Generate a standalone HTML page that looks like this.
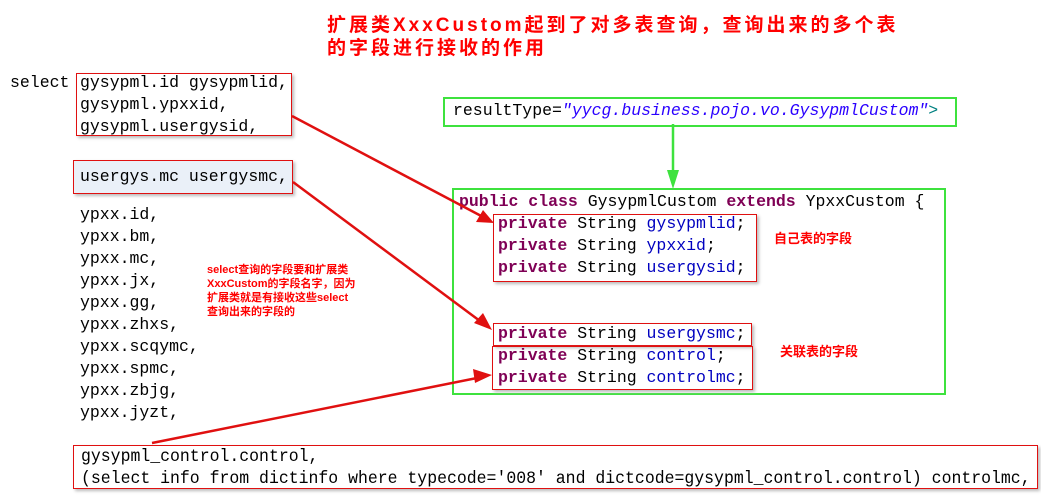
<!DOCTYPE html>
<html><head><meta charset="utf-8"><style>
body{margin:0;width:1041px;height:495px;background:#fff;position:relative;overflow:hidden;font-family:"Liberation Mono",monospace}
.t{position:absolute;white-space:pre;font-size:16.5px;line-height:22px;color:#000}
.b{position:absolute;border:1px solid #e01010;box-shadow:2px 2px 3px #bbb}
.g{position:absolute;border:2px solid #3ee23e}
.kw{color:#7f0055;font-weight:bold}
.f{color:#0000c0}
.red{position:absolute;color:#f00;font-weight:bold;font-family:"Liberation Sans","Noto Sans CJK SC",sans-serif;white-space:pre}
</style></head><body>
<div class="red" style="left:327px;top:14px;font-size:19px;line-height:23px;letter-spacing:3px">扩展类XxxCustom起到了对多表查询，查询出来的多个表
的字段进行接收的作用</div>

<div class="t" style="left:10px;top:72px">select</div>
<div class="b" style="left:76px;top:73px;width:214px;height:61px"></div>
<div class="t" style="left:80px;top:72px">gysypml.id gysypmlid,
gysypml.ypxxid,
gysypml.usergysid,</div>
<div class="b" style="left:73px;top:160px;width:218px;height:32px;background:#eaf0f8"></div>
<div class="t" style="left:80px;top:166px">usergys.mc usergysmc,</div>
<div class="t" style="left:80px;top:204px">ypxx.id,
ypxx.bm,
ypxx.mc,
ypxx.jx,
ypxx.gg,
ypxx.zhxs,
ypxx.scqymc,
ypxx.spmc,
ypxx.zbjg,
ypxx.jyzt,</div>

<div class="red" style="left:207px;top:263px;font-size:11px;line-height:14px">select查询的字段要和扩展类
XxxCustom的字段名字，因为
扩展类就是有接收这些select
查询出来的字段的</div>

<div class="g" style="left:443px;top:97px;width:510px;height:26px"></div>
<div class="t" style="left:453px;top:100px">resultType=<i class="f" style="color:#2a00ff">"yycg.business.pojo.vo.GysypmlCustom"</i><span style="color:#008080">&gt;</span></div>

<div class="g" style="left:452px;top:188px;width:490px;height:203px"></div>
<div class="t" style="left:459px;top:191px"><span class="kw">public class</span> GysypmlCustom <span class="kw">extends</span> YpxxCustom {</div>
<div class="b" style="left:493px;top:214px;width:262px;height:66px"></div>
<div class="t" style="left:498px;top:213px"><span class="kw">private</span> String <span class="f">gysypmlid</span>;
<span class="kw">private</span> String <span class="f">ypxxid</span>;
<span class="kw">private</span> String <span class="f">usergysid</span>;</div>
<div class="b" style="left:493px;top:323px;width:257px;height:21px"></div>
<div class="b" style="left:492px;top:346px;width:259px;height:42px"></div>
<div class="t" style="left:498px;top:323px"><span class="kw">private</span> String <span class="f">usergysmc</span>;
<span class="kw">private</span> String <span class="f">control</span>;
<span class="kw">private</span> String <span class="f">controlmc</span>;</div>
<div class="red" style="left:774px;top:228px;font-size:13px">自己表的字段</div>
<div class="red" style="left:780px;top:341px;font-size:13px">关联表的字段</div>

<div class="b" style="left:73px;top:445px;width:963px;height:42px"></div>
<div class="t" style="left:81px;top:446px;font-size:17.8px;line-height:22px;transform:scaleX(0.927);transform-origin:0 0">gysypml_control.control,
(select info from dictinfo where typecode='008' and dictcode=gysypml_control.control) controlmc,</div>

<svg width="1041" height="495" style="position:absolute;left:0;top:0">
<g stroke="#e01010" stroke-width="2.5" fill="none">
<line x1="292" y1="116" x2="485" y2="218"/>
<line x1="293" y1="182" x2="484" y2="324"/>
<line x1="152" y1="443" x2="482" y2="377"/>
</g>
<g fill="#e01010">
<polygon points="494,223 476,222 483,210"/>
<polygon points="492,330 474,323 483,313"/>
<polygon points="492,375 475,383 473,369"/>
</g>
<line x1="673" y1="124" x2="673" y2="176" stroke="#3ee23e" stroke-width="2.5"/>
<polygon points="673,189 667,170 679,170" fill="#3ee23e"/>
</svg>
</body></html>
